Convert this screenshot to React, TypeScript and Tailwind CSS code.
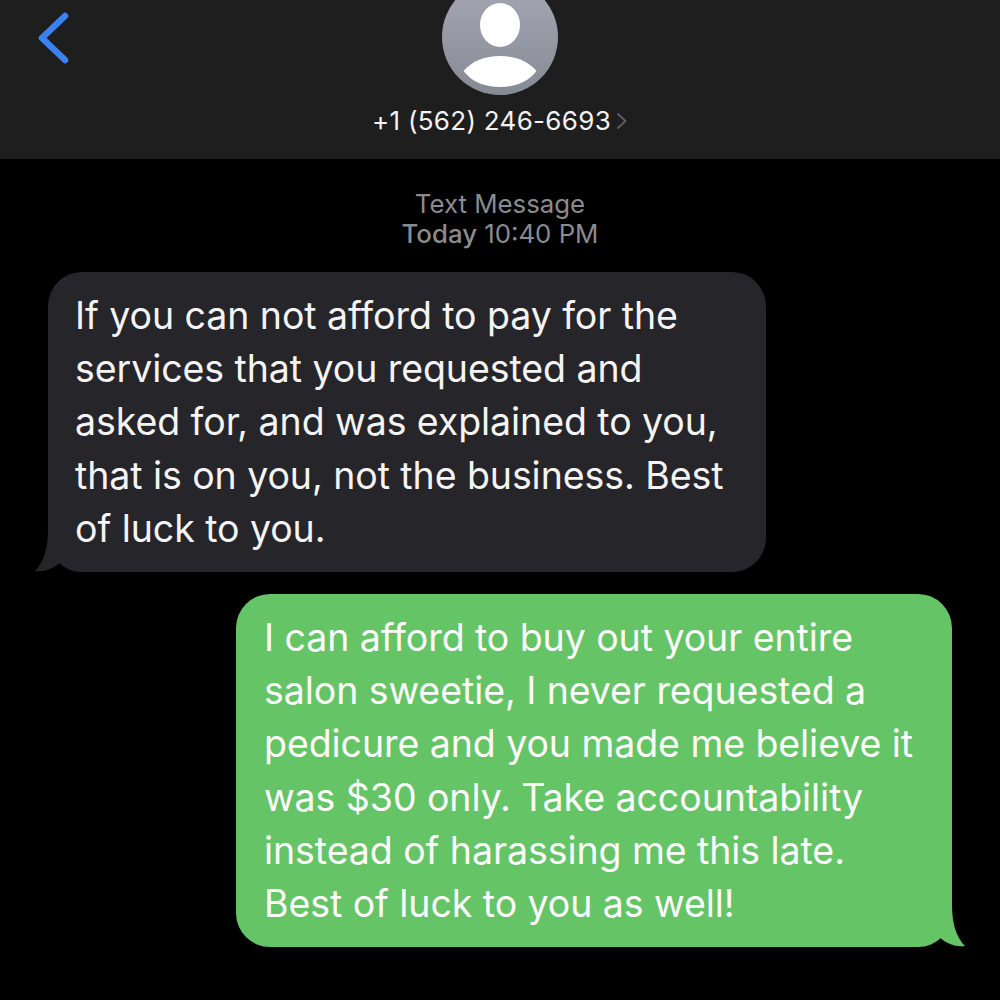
const sans = 'font-["Inter","Liberation_Sans",sans-serif]'

const incoming = [
  'If you can not afford to pay for the',
  'services that you requested and',
  'asked for, and was explained to you,',
  'that is on you, not the business. Best',
  'of luck to you.',
]

const outgoing = [
  'I can afford to buy out your entire',
  'salon sweetie, I never requested a',
  'pedicure and you made me believe it',
  'was $30 only. Take accountability',
  'instead of harassing me this late.',
  'Best of luck to you as well!',
]

function Lines({ lines }: { lines: string[] }) {
  return (
    <div className="relative">
      {lines.map((line) => (
        <div key={line} className="h-[53.2px] whitespace-nowrap">
          {line}
        </div>
      ))}
    </div>
  )
}

function Avatar() {
  return (
    <svg width="116" height="116" viewBox="0 0 116 116" className="mt-[-21px] shrink-0">
      <defs>
        <linearGradient id="avatarFill" x1="0" y1="0" x2="0" y2="1">
          <stop offset="0" stopColor="#a6a9b5" />
          <stop offset="1" stopColor="#868a95" />
        </linearGradient>
      </defs>
      <circle cx="58" cy="58" r="58" fill="url(#avatarFill)" />
      <ellipse cx="58" cy="46" rx="20" ry="22" fill="#fff" />
      <path d="M21.5 92 C30 82 43 77 58 77 C73 77 86 82 94.5 92 C86 103 73 108 58 108 C43 108 30 103 21.5 92 Z" fill="#fff" />
    </svg>
  )
}

export default function App() {
  return (
    <div className={`w-[1000px] h-[1000px] overflow-hidden bg-black flex flex-col ${sans}`}>
      {/* Nav bar */}
      <header className="relative h-[159px] shrink-0 bg-[#1e1e1e] flex flex-col items-center">
        <svg width="40" height="60" viewBox="0 0 40 60" className="absolute left-[34px] top-[8px]">
          <path d="M31 8 L8 30 L31 52" fill="none" stroke="#3b82f0" strokeWidth="6.5" strokeLinecap="round" strokeLinejoin="round" />
        </svg>
        <Avatar />
        <div className="mt-[10px] flex items-center text-[26px] leading-[32px] tracking-[0.3px] text-[#f2f2f2]">
          <span>+1 (562) 246-6693</span>
          <svg width="12" height="18" viewBox="0 0 12 18" className="ml-[5px]">
            <path d="M2 2 L9.5 9 L2 16" fill="none" stroke="#5c5c5e" strokeWidth="2" strokeLinecap="round" strokeLinejoin="round" />
          </svg>
        </div>
      </header>

      {/* Conversation */}
      <main className="flex flex-col">
        <div className="mt-[30px] text-center text-[25.8px] leading-[30px] text-[#8b8b8f]">
          <div>Text Message</div>
          <div>
            <span className="font-medium">Today</span> 10:40 PM
          </div>
        </div>

        <div className="relative mt-[23px] ml-[48px] w-[718px] h-[300px] rounded-[34px] bg-[#26252a] pl-[27px] pt-[17px] text-[37.5px] leading-[53.2px] tracking-[-0.07px] text-[#f4f4f4]">
          <svg width="40" height="42" viewBox="0 0 40 42" className="absolute left-[-14px] bottom-0">
            <path d="M14 0 C14 18 10 32 1 41 C11 42.5 21 38 29 30 L29 0 Z" fill="#26252a" />
          </svg>
          <Lines lines={incoming} />
        </div>

        <div className="relative mt-[22px] ml-[236px] w-[716px] h-[353px] rounded-[34px] bg-[#65c466] pl-[28px] pt-[17px] text-[37.5px] leading-[53.2px] tracking-[-0.07px] text-[#fbfdfb]">
          <svg width="40" height="42" viewBox="0 0 40 42" className="absolute right-[-14px] bottom-0">
            <path d="M26 0 C26 18 30 32 39 41 C29 42.5 19 38 11 30 L11 0 Z" fill="#65c466" />
          </svg>
          <Lines lines={outgoing} />
        </div>
      </main>
    </div>
  )
}
